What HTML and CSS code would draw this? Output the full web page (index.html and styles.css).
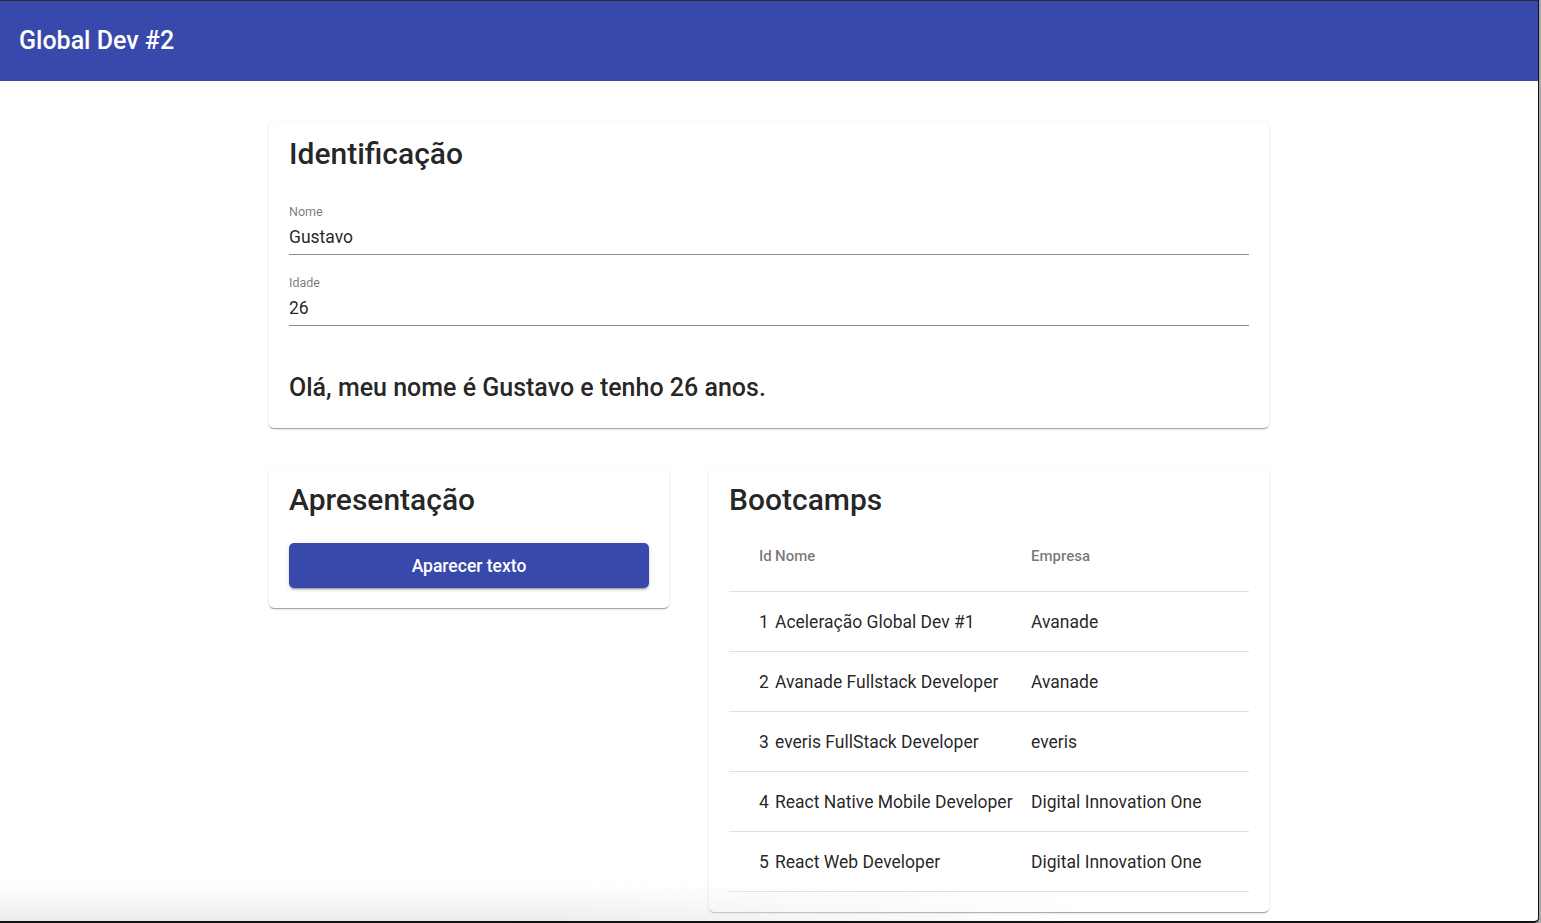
FILE: index.html
```html
<!DOCTYPE html>
<html lang="pt-BR">
<head>
<meta charset="utf-8">
<title>Global Dev #2</title>
<link rel="stylesheet" href="styles.css">
</head>
<body>
<div class="window">
  <header class="toolbar">Global Dev #2</header>
  <main class="container">
    <section class="card card-ident">
      <h1 class="card-title">Identificação</h1>
      <div class="field">
        <label class="field-label">Nome</label>
        <div class="field-value">Gustavo</div>
      </div>
      <div class="field">
        <label class="field-label">Idade</label>
        <div class="field-value">26</div>
      </div>
      <h3 class="greeting">Olá, meu nome é Gustavo e tenho 26 anos.</h3>
    </section>
    <div class="row">
      <section class="card">
        <h1 class="card-title">Apresentação</h1>
        <button class="btn">Aparecer texto</button>
      </section>
      <section class="card">
        <h1 class="card-title">Bootcamps</h1>
        <table class="table">
          <colgroup><col class="c-id"><col class="c-name"><col class="c-company"></colgroup>
          <thead>
            <tr><th class="id">Id</th><th>Nome</th><th class="company">Empresa</th></tr>
          </thead>
          <tbody>
            <tr><td class="id">1</td><td>Aceleração Global Dev #1</td><td class="company">Avanade</td></tr>
            <tr><td class="id">2</td><td>Avanade Fullstack Developer</td><td class="company">Avanade</td></tr>
            <tr><td class="id">3</td><td>everis FullStack Developer</td><td class="company">everis</td></tr>
            <tr><td class="id">4</td><td>React Native Mobile Developer</td><td class="company">Digital Innovation One</td></tr>
            <tr><td class="id">5</td><td>React Web Developer</td><td class="company">Digital Innovation One</td></tr>
          </tbody>
        </table>
      </section>
    </div>
  </main>
  <div class="bottom-fade"></div>
</div>
</body>
</html>
```
FILE: styles.css
```css
html, body {
  margin: 0;
  padding: 0;
  height: 100%;
}
body {
  background: #a9a9a9;
  font-family: Roboto, "Noto Sans", "Liberation Sans", sans-serif;
  color: rgba(0, 0, 0, 0.87);
  overflow: hidden;
}
.window {
  box-sizing: border-box;
  width: 1539px;
  height: 923px;
  background: #fff;
  border-top: 1px solid #2b2b2b;
  border-right: 1px solid #111;
  border-bottom: 2px solid #111;
  border-bottom-right-radius: 5px;
  overflow: hidden;
  position: relative;
}
.toolbar {
  height: 80px;
  background: #3949ab;
  color: #fff;
  font-size: 25px;
  font-weight: 500;
  line-height: 80px;
  padding: 0 19px;
  letter-spacing: 0;
}
.container {
  width: 1000px;
  margin: 0 auto;
  padding-top: 41px;
}
.card {
  background: #fff;
  border-radius: 5px;
  box-shadow: 0 2px 1px -1px rgba(0,0,0,.2), 0 1px 1px 0 rgba(0,0,0,.14), 0 1px 3px 0 rgba(0,0,0,.12);
  padding: 12px 20px 20px;
  box-sizing: border-box;
}
.card-title {
  margin: 0;
  font-size: 30px;
  line-height: 40px;
  font-weight: 500;
}
.field {
  margin-top: 30px;
  border-bottom: 1px solid rgba(0,0,0,.45);
  padding-bottom: 6px;
}
.field + .field {
  margin-top: 20px;
}
.field-label {
  display: block;
  font-size: 12.5px;
  line-height: 16px;
  color: rgba(0,0,0,.54);
}
.field-value {
  font-size: 17.5px;
  line-height: 22px;
  margin-top: 6px;
}
.greeting {
  margin: 46px 0 4px;
  font-size: 25px;
  line-height: 32px;
  font-weight: 500;
}
.row {
  display: grid;
  grid-template-columns: 400px 560px;
  gap: 40px;
  margin-top: 40px;
  align-items: start;
}
.btn {
  display: block;
  width: 100%;
  height: 45px;
  margin-top: 23px;
  border: 0;
  border-radius: 5px;
  background: #3949ab;
  color: #fff;
  font-family: inherit;
  font-size: 17.5px;
  font-weight: 500;
  box-shadow: 0 3px 1px -2px rgba(0,0,0,.2), 0 2px 2px 0 rgba(0,0,0,.14), 0 1px 5px 0 rgba(0,0,0,.12);
}
.table {
  width: 520px;
  border-collapse: collapse;
  table-layout: fixed;
  margin-top: 1px;
}
.c-id { width: 46px; }
.c-name { width: 256px; }
.c-company { width: 218px; }
.table th, .table td {
  text-align: left;
  padding: 0;
  border-bottom: 1px solid rgba(0,0,0,.12);
  white-space: nowrap;
}
.table th {
  height: 70px;
  font-size: 15px;
  font-weight: 500;
  color: rgba(0,0,0,.54);
}
.table td {
  height: 59px;
  font-size: 17.5px;
}
.table .id { padding-left: 30px; }
.table .company { padding-right: 30px; }
.bottom-fade {
  position: absolute;
  left: 0;
  right: 0;
  bottom: 0;
  height: 38px;
  background: linear-gradient(to bottom, rgba(235,235,235,0), rgba(235,235,235,1));
  -webkit-mask-image: linear-gradient(to right, #000 0, #000 500px, transparent 1100px);
  mask-image: linear-gradient(to right, #000 0, #000 500px, transparent 1100px);
  pointer-events: none;
}
```
